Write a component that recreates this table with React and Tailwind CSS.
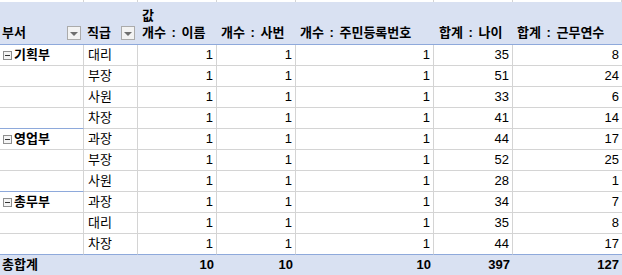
import React from "react";

const groups = [
  {
    name: "기획부",
    rows: [
      ["대리", 35, 8],
      ["부장", 51, 24],
      ["사원", 33, 6],
      ["차장", 41, 14],
    ],
  },
  {
    name: "영업부",
    rows: [
      ["과장", 44, 17],
      ["부장", 52, 25],
      ["사원", 28, 1],
    ],
  },
  {
    name: "총무부",
    rows: [
      ["과장", 34, 7],
      ["대리", 35, 8],
      ["차장", 44, 17],
    ],
  },
];

const cols = "grid grid-cols-[84px_54px_79px_79px_138px_79px_109px]";
const font = { fontFamily: "'Liberation Sans', 'Noto Sans CJK KR', sans-serif" };

const Dropdown = () => (
  <span className="mr-[3px] flex h-[14px] w-[14px] items-center justify-center border border-[#ababab] bg-[#f3f3f3]">
    <span className="mt-[1px] h-0 w-0 border-x-[4px] border-t-[4px] border-x-transparent border-t-[#6f6f6f]" />
  </span>
);

const Collapse = () => (
  <span className="mr-[2px] flex h-[9px] w-[9px] items-center justify-center border border-[#8f8f8f] bg-[#f4f4f4]">
    <span className="h-[1px] w-[5px] bg-[#333]" />
  </span>
);

const Num = ({ v, last, bold }) => (
  <div
    className={`flex items-center justify-end pr-[3px] ${bold ? "font-bold" : "border-r border-[#d4d4d4]"} ${last ? "" : ""}`}
  >
    {v}
  </div>
);

const App = () => {
  const flat = [];
  groups.forEach((g, gi) => {
    g.rows.forEach((r, ri) => {
      flat.push({ group: ri === 0 ? g.name : "", lastInGroup: ri === g.rows.length - 1 && gi < groups.length - 1, rank: r[0], age: r[1], years: r[2] });
    });
  });

  return (
    <div className="h-[275px] w-[622px] overflow-hidden bg-white text-[13px] text-black" style={font}>
      {/* 윗줄 조각 */}
      <div className={`${cols} h-[2px]`}>
        {[0, 1, 2, 3, 4, 5, 6].map((i) => (
          <div key={i} className="border-r border-[#d4d4d4]" />
        ))}
      </div>

      {/* 헤더 */}
      <div className="border-b border-[#8ea9db] bg-[#d9e1f2] font-bold">
        <div className={`${cols} h-[20px]`}>
          <div />
          <div />
          <div className="flex items-end pl-[4px] leading-none">값</div>
        </div>
        <div className={`${cols} h-[22px] whitespace-nowrap`}>
          <div className="flex items-center justify-between pl-[2px]">
            <span>부서</span>
            <Dropdown />
          </div>
          <div className="flex items-center justify-between pl-[3px]">
            <span>직급</span>
            <Dropdown />
          </div>
          <div className="flex items-center pl-[4px] [word-spacing:2px]">개수 : 이름</div>
          <div className="flex items-center pl-[4px] [word-spacing:2px]">개수 : 사번</div>
          <div className="flex items-center pl-[4px] [word-spacing:2px]">개수 : 주민등록번호</div>
          <div className="flex items-center pl-[5px] [word-spacing:2px]">합계 : 나이</div>
          <div className="flex items-center pl-[4px] [word-spacing:2px]">합계 : 근무연수</div>
        </div>
      </div>

      {/* 데이터 */}
      {flat.map((r, i) => {
        const lastRow = i === flat.length - 1;
        const line = lastRow ? "border-[#8ea9db]" : "border-[#d4d4d4]";
        return (
          <div key={i} className={`${cols} h-[21px]`}>
            <div
              className={`flex items-center border-r border-b border-r-[#d4d4d4] pl-[3px] font-bold ${
                r.lastInGroup || lastRow ? "border-b-[#8ea9db]" : "border-b-[#d4d4d4]"
              }`}
            >
              {r.group && (
                <>
                  <Collapse />
                  <span>{r.group}</span>
                </>
              )}
            </div>
            <div className={`flex items-center border-r border-b border-r-[#d4d4d4] pl-[4px] ${lastRow ? "border-b-[#8ea9db]" : "border-b-[#d4d4d4]"}`}>
              {r.rank}
            </div>
            {[1, 1, 1, r.age, r.years].map((v, j) => (
              <div
                key={j}
                className={`flex items-center justify-end border-b pr-[3px] ${line} ${j < 4 ? "border-r border-r-[#d4d4d4]" : ""}`}
              >
                {v}
              </div>
            ))}
          </div>
        );
      })}

      {/* 총합계 */}
      <div className={`${cols} h-[20px] bg-[#d9e1f2] font-bold`}>
        <div className="flex items-center pl-[2px]">총합계</div>
        <div />
        <Num v={10} bold />
        <Num v={10} bold />
        <Num v={10} bold />
        <Num v={397} bold />
        <Num v={127} bold />
      </div>
    </div>
  );
};

export default App;
